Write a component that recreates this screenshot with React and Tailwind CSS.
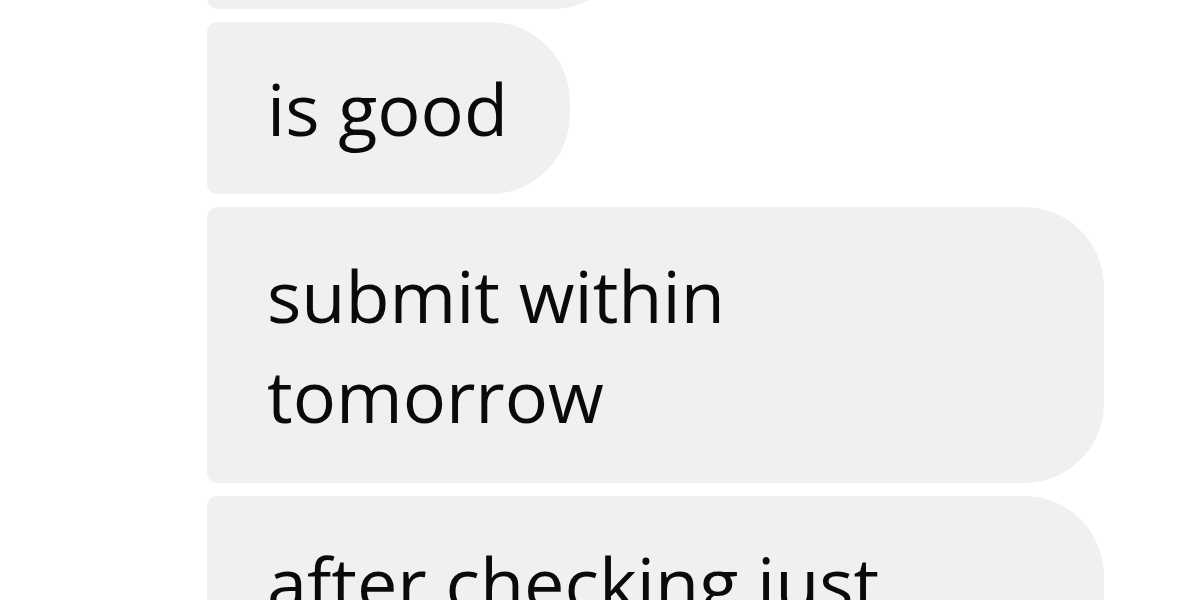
import React from "react";

function Bubble({ children, className = "" }) {
  return (
    <div
      className={
        "bg-[#f0f0f0] rounded-l-[10px] rounded-r-[80px] pl-[60px] pr-[62px] py-[36px] text-[#0a0a0a] text-[72px] leading-[100px] whitespace-nowrap " +
        className
      }
    >
      {children}
    </div>
  );
}

export default function App() {
  return (
    <div
      className="w-[1200px] h-[600px] overflow-hidden bg-white"
      style={{ fontFamily: '"Open Sans", "Noto Sans", sans-serif' }}
    >
      <div className="-mt-[163px] ml-[207px] flex flex-col items-start gap-[13px]">
        <Bubble className="w-[425px]">looks ok</Bubble>
        <Bubble>is good</Bubble>
        <Bubble className="w-[897px] py-[38px]">
          submit within
          <br />
          tomorrow
        </Bubble>
        <Bubble className="w-[897px]">
          after checking just
          <br />
          let me know
        </Bubble>
      </div>
    </div>
  );
}
